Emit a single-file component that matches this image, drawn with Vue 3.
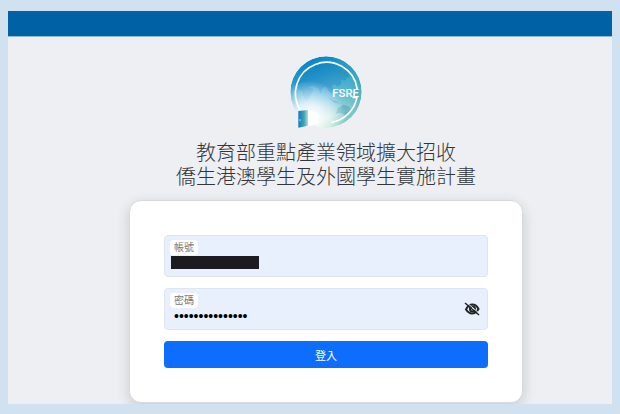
<script setup>
import { ref } from 'vue'

const account = ref('')
const password = ref('abcdefghijklmno')
const showPassword = ref(false)

function togglePassword() {
  showPassword.value = !showPassword.value
}
</script>

<template>
  <div class="page">
    <header class="topbar"></header>

    <main class="content">
      <svg class="logo" viewBox="30 18 216 216" role="img" aria-label="FSRE">
        <defs>
          <linearGradient id="sea" x1="0.25" y1="0" x2="0.6" y2="1">
            <stop offset="0" stop-color="#0080c4" />
            <stop offset="0.3" stop-color="#2c9ed2" />
            <stop offset="0.6" stop-color="#74c2e0" />
            <stop offset="0.85" stop-color="#c4e6e2" />
            <stop offset="1" stop-color="#a5d9c4" />
          </linearGradient>
          <linearGradient id="east" x1="0" y1="0" x2="1" y2="0">
            <stop offset="0.55" stop-color="#22a5ae" stop-opacity="0" />
            <stop offset="1" stop-color="#159aa5" stop-opacity="0.55" />
          </linearGradient>
          <radialGradient id="glow">
            <stop offset="0" stop-color="#fff" />
            <stop offset="0.35" stop-color="#fff" stop-opacity="0.8" />
            <stop offset="1" stop-color="#fff" stop-opacity="0" />
          </radialGradient>
          <linearGradient id="door" x1="0" y1="0" x2="1" y2="0">
            <stop offset="0" stop-color="#1777b5" />
            <stop offset="0.6" stop-color="#3aa7bd" />
            <stop offset="1" stop-color="#b8e0c8" />
          </linearGradient>
          <clipPath id="globe">
            <circle cx="138" cy="126" r="107" />
          </clipPath>
        </defs>
        <g clip-path="url(#globe)">
          <circle cx="138" cy="126" r="107" fill="url(#sea)" />
          <circle cx="138" cy="126" r="107" fill="url(#east)" />
          <path
            class="land"
            d="M62 72l20-22 28-12 34-5 34 8 28 16 12 20-14 3-10 12-12-4 2 14-12 8-8-8-9 5 6 13-8 12-9-13-8-10-8 5-6 19-8-18-14-8-14 4-12-11-16 8-12-8 8-14zM56 108l20-6 14 12 10 4-8 18-13 20-10-17-3-17-12-4zM148 142l10 9 11 2 9 8-16-3-12-10zM172 176l18-12 18 6 6 15-14 13-16-9-16 2z"
          />
          <circle cx="88" cy="200" r="108" fill="url(#glow)" />
        </g>
        <path class="ring" d="M61 180A93 93 0 1 1 231 114V117" />
        <path class="ring" d="M217 142H231A94 94 0 0 1 154 217" />
        <path d="M55 183l29-3v47l-29 6z" fill="url(#door)" />
        <path d="M84 180l32 9v30l-32 12z" fill="#fff" opacity="0.8" />
        <path class="knob" d="M60 207v7" />
        <text x="157" y="142">FSRE</text>
      </svg>

      <h1 class="title">
        教育部重點產業領域擴大招收<br />
        僑生港澳學生及外國學生實施計畫
      </h1>

      <form class="card" @submit.prevent>
        <div class="field">
          <div class="entry">
            <label for="account">帳號</label>
            <div class="masked">
              <input id="account" v-model="account" type="text" />
            </div>
          </div>
        </div>

        <div class="field">
          <div class="entry">
            <label for="password">密碼</label>
            <input
              id="password"
              v-model="password"
              :type="showPassword ? 'text' : 'password'"
            />
          </div>
          <button class="eye" type="button" aria-label="顯示密碼" @click="togglePassword">
            <svg viewBox="0 0 32 28">
              <path class="eye-line" d="M4 15C8 7 12 5 17 5S26 8 29 14C25 21 21 23 16 23S8 21 4 15z" />
              <circle class="eye-line" cx="17" cy="14" r="5" />
              <path class="gap" d="M5 1L31 23" />
              <path class="slash" d="M2 2L30 26" />
            </svg>
          </button>
        </div>

        <button class="submit" type="submit">登入</button>
      </form>
    </main>
  </div>
</template>

<style>
body {
  margin: 0;
  background: #d0e2ef;
}
</style>

<style scoped>
.page {
  margin: 11px 8px 10px;
  background: #eeeff3;
  overflow: hidden;
  font-family: "Liberation Sans", "Noto Sans CJK TC", sans-serif;
}

.topbar {
  height: 25px;
  background: #0061a5;
  border-bottom: 1px solid #8fb9d8;
}

.content {
  display: flex;
  flex-direction: column;
  align-items: center;
  padding: 19px 16px 1px 48px;
}

.logo {
  width: 72px;
  height: 72px;
}

.logo text {
  font: 500 34px Roboto, "Open Sans", sans-serif;
  fill: #fff;
}

.land {
  fill: #0871aa;
  opacity: 0.25;
}

.ring {
  fill: none;
  stroke: #fff;
  stroke-width: 5;
}

.knob {
  stroke: #fff;
  stroke-width: 2;
}

.title {
  margin: 13px 0 11px;
  color: #32363a;
  font-size: 20px;
  font-weight: 300;
  line-height: 24px;
  text-align: center;
}

.card {
  box-sizing: border-box;
  display: flex;
  flex-direction: column;
  gap: 11px;
  width: 100%;
  max-width: 394px;
  padding: 34px;
  border: 1px solid #d9dadd;
  border-radius: 12px;
  background: #fff;
  box-shadow: 0 4px 14px rgba(0, 0, 0, 0.16);
}

.field {
  display: flex;
  align-items: center;
  padding: 4px 7px 4px 5px;
  border: 1px solid #dfe5ef;
  border-radius: 4px;
  background: #e8f0fe;
}

.entry {
  display: flex;
  flex: 1;
  flex-direction: column;
  align-items: flex-start;
}

label {
  padding: 0 4px;
  border-radius: 4px;
  background: #fff;
  color: #777;
  font-size: 10px;
  line-height: 15px;
}

input {
  box-sizing: border-box;
  width: 100%;
  height: 15px;
  margin-bottom: 2px;
  padding: 0 4px;
  border: 0;
  outline: 0;
  background: transparent;
  color: #000;
  font-family: "Liberation Sans", sans-serif;
  font-size: 14px;
}

.masked {
  width: 88px;
  height: 13px;
  margin: 1px 1px 3px;
  background: #1e1b20;
}

.masked input {
  display: block;
  height: 13px;
  margin: 0;
  color: transparent;
}

.eye {
  padding: 0;
  border: 0;
  background: transparent;
  cursor: pointer;
}

.eye svg {
  display: block;
  width: 16px;
  height: 14px;
}

.eye-line {
  fill: none;
  stroke: #212529;
  stroke-width: 4;
}

.gap {
  stroke: #e8f0fe;
  stroke-width: 2;
}

.slash {
  stroke: #212529;
  stroke-width: 3;
}

.submit {
  height: 27px;
  padding: 0;
  border: 0;
  border-radius: 4px;
  background: #0d6efd;
  color: #fff;
  font-family: "Noto Sans CJK TC", sans-serif;
  font-size: 11px;
  font-weight: 400;
  cursor: pointer;
}
</style>
